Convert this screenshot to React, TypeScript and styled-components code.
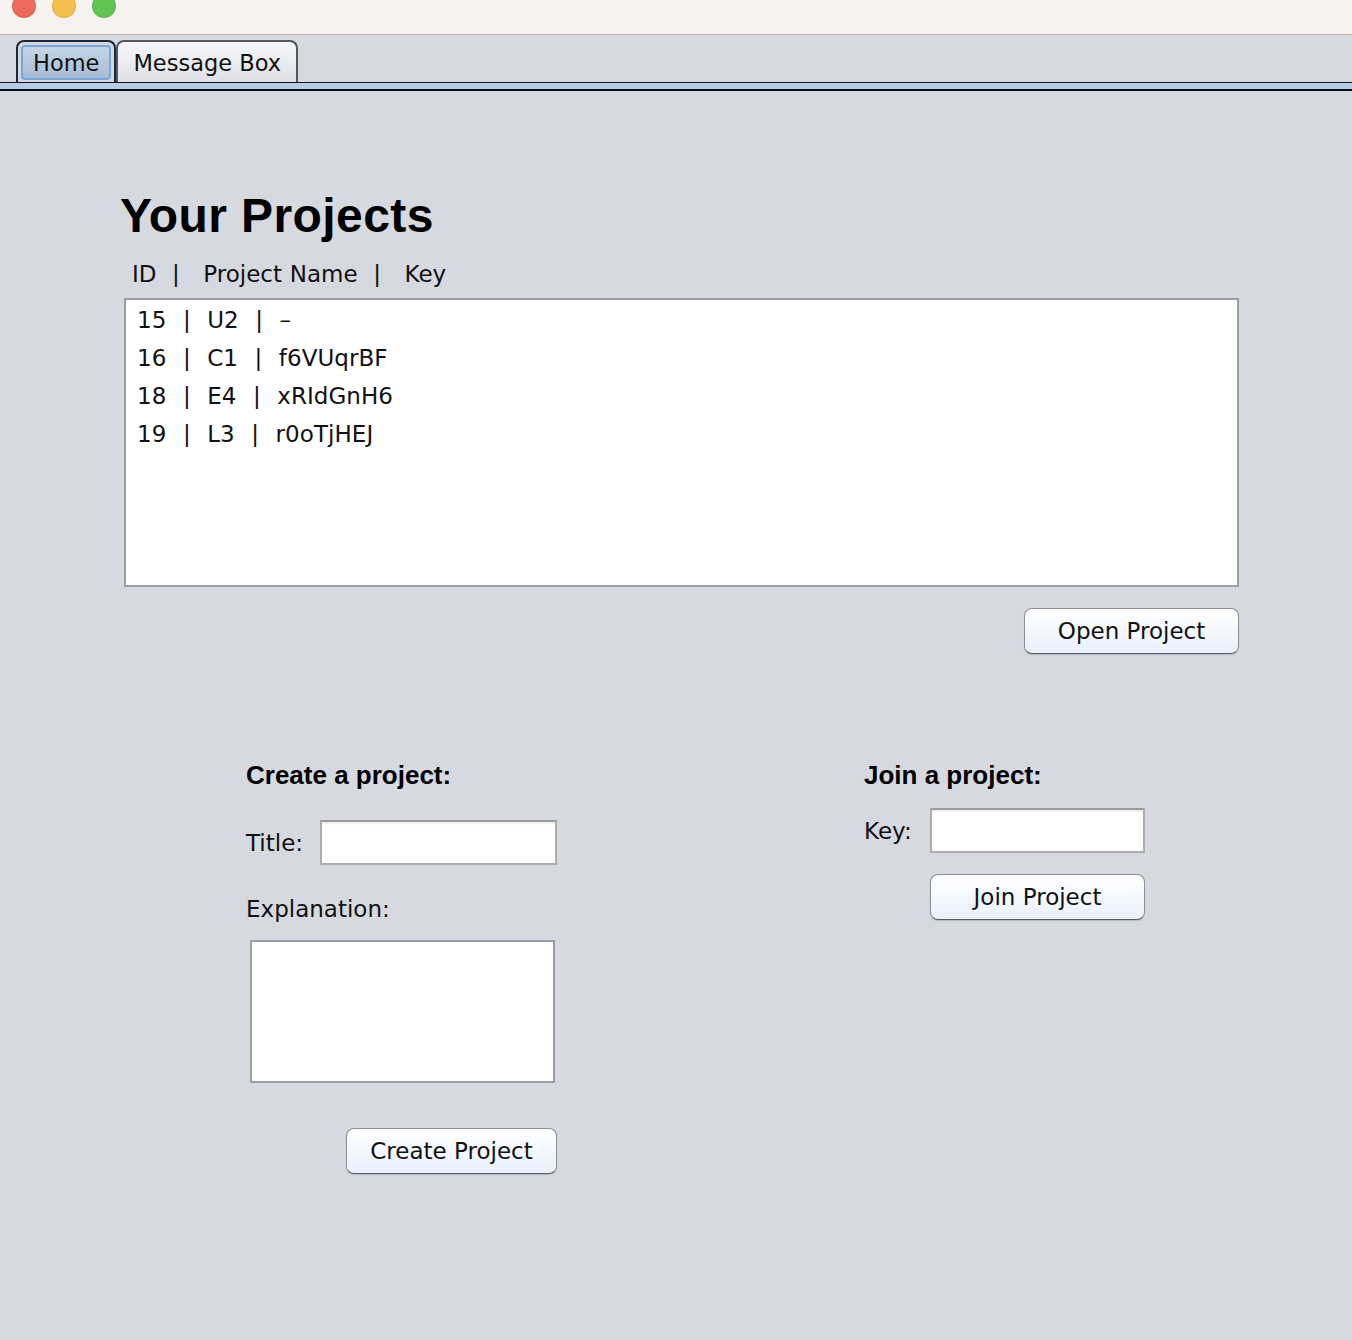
import React from "react";
import styled, { createGlobalStyle } from "styled-components";

interface Project {
  id: number;
  name: string;
  key: string;
}

const projects: Project[] = [
  { id: 15, name: "U2", key: "–" },
  { id: 16, name: "C1", key: "f6VUqrBF" },
  { id: 18, name: "E4", key: "xRIdGnH6" },
  { id: 19, name: "L3", key: "r0oTjHEJ" },
];

const GlobalStyle = createGlobalStyle`
  html, body {
    margin: 0;
    padding: 0;
    background: #d6d9e0;
  }
  body {
    font-family: "DejaVu Sans", "Liberation Sans", sans-serif;
    color: #111;
  }
`;

export default function App() {
  return (
    <>
      <GlobalStyle />
      <Window>
        <TitleBar>
          <Light color="#ec6a5e" />
          <Light color="#f4bf4f" />
          <Light color="#61c554" />
        </TitleBar>

        <TabRow>
          <Tab active>
            <TabInner active>Home</TabInner>
          </Tab>
          <Tab>
            <TabInner>Message Box</TabInner>
          </Tab>
        </TabRow>
        <TabStrip />

        <Content>
          <Heading>Your Projects</Heading>
          <ColumnHeader>{"ID  |   Project Name  |   Key"}</ColumnHeader>
          <ProjectList>
            {projects.map((p) => (
              <ProjectRow key={p.id}>{`${p.id}  |  ${p.name}  |  ${p.key}`}</ProjectRow>
            ))}
          </ProjectList>
          <ButtonRow>
            <Button width={215}>Open Project</Button>
          </ButtonRow>

          <Forms>
            <FormColumn width={311}>
              <SubHeading>Create a project:</SubHeading>
              <FieldRow top={31}>
                <Label>Title:</Label>
                <TextField width={237} />
              </FieldRow>
              <Label style={{ marginTop: 30 }}>Explanation:</Label>
              <TextArea />
              <Button width={211} top={45}>
                Create Project
              </Button>
            </FormColumn>

            <FormColumn width={281}>
              <SubHeading>Join a project:</SubHeading>
              <FieldRow top={19}>
                <Label>Key:</Label>
                <TextField width={215} />
              </FieldRow>
              <Button width={215} top={21}>
                Join Project
              </Button>
            </FormColumn>
          </Forms>
        </Content>
      </Window>
    </>
  );
}

const Window = styled.div`
  min-height: 1340px;
  background: #d6d9e0;
`;

const TitleBar = styled.div`
  height: 34px;
  background: #f6f2ef;
  border-bottom: 1px solid #b8b8bc;
  display: flex;
  align-items: flex-start;
  gap: 16px;
  padding-left: 12px;
  overflow: hidden;
`;

const Light = styled.span<{ color: string }>`
  width: 24px;
  height: 24px;
  margin-top: -6px;
  border-radius: 50%;
  background: ${(props) => props.color};
  box-shadow: inset 0 0 0 1px rgba(0, 0, 0, 0.08);
`;

const TabRow = styled.div`
  display: flex;
  align-items: flex-end;
  padding: 5px 0 0 16px;
  border-bottom: 1px solid #0e1424;
`;

const Tab = styled.div<{ active?: boolean }>`
  height: 42px;
  box-sizing: border-box;
  border: 2px solid ${(props) => (props.active ? "#1c2738" : "#55575e")};
  border-bottom: none;
  border-radius: 8px 8px 0 0;
  padding: ${(props) => (props.active ? "3px 3px 2px" : "0")};
  background: ${(props) =>
    props.active ? "#d3d8e0" : "linear-gradient(#f7f7f9, #dfe1e7)"};
  display: flex;
`;

const TabInner = styled.div<{ active?: boolean }>`
  display: flex;
  align-items: center;
  justify-content: center;
  font-size: 22.5px;
  color: #111;
  padding: ${(props) => (props.active ? "1px 10px 0" : "1px 15px 0")};
  border-radius: 4px;
  border: ${(props) => (props.active ? "2px solid #7ba7d8" : "none")};
  background: ${(props) =>
    props.active ? "linear-gradient(#c6d6e8, #a6bcd4)" : "transparent"};
`;

const TabStrip = styled.div`
  height: 6px;
  background: #b8cde3;
  border-bottom: 2px solid #080c1a;
`;

const Content = styled.div`
  padding: 97px 0 0 120px;
  width: 1120px;
`;

const Heading = styled.h1`
  margin: 0;
  font-family: "Liberation Sans", Arial, sans-serif;
  font-weight: bold;
  font-size: 48px;
  letter-spacing: 0.4px;
  line-height: 56px;
  color: #000;
`;

const ColumnHeader = styled.div`
  margin: 16px 0 0 12px;
  font-size: 23px;
  line-height: 28px;
  word-spacing: 0.5px;
  white-space: pre;
`;

const ProjectList = styled.div`
  margin: 10px 0 0 4px;
  width: 1115px;
  height: 289px;
  box-sizing: border-box;
  border: 2px solid #9b9ea6;
  background: #fff;
  padding: 1px 11px;
`;

const ProjectRow = styled.div`
  font-size: 23px;
  line-height: 38px;
  word-spacing: 0.9px;
  letter-spacing: 0.05px;
  white-space: pre;
`;

const ButtonRow = styled.div`
  display: flex;
  justify-content: flex-end;
  width: 1119px;
  margin-top: 21px;
`;

const Button = styled.button<{ width: number; top?: number }>`
  width: ${(props) => props.width}px;
  height: 46px;
  margin-top: ${(props) => props.top ?? 0}px;
  align-self: flex-end;
  box-sizing: border-box;
  border: 1px solid #8b8e95;
  border-bottom-color: #5a5d63;
  border-radius: 8px;
  background: linear-gradient(#ffffff, #e9f1fc);
  box-shadow: 0 1px 1px rgba(0, 0, 0, 0.15);
  font-family: "DejaVu Sans", sans-serif;
  font-size: 23px;
  color: #111;
  padding: 0;
`;

const Forms = styled.div`
  display: flex;
  gap: 307px;
  margin: 103px 0 0 126px;
`;

const FormColumn = styled.div<{ width: number }>`
  width: ${(props) => props.width}px;
  display: flex;
  flex-direction: column;
`;

const SubHeading = styled.h2`
  margin: 0;
  font-family: "Liberation Sans", Arial, sans-serif;
  font-weight: bold;
  font-size: 26px;
  line-height: 32px;
  padding-top: 2px;
  color: #000;
`;

const FieldRow = styled.div<{ top: number }>`
  display: flex;
  align-items: center;
  justify-content: space-between;
  margin-top: ${(props) => props.top - 2}px;
`;

const Label = styled.span`
  font-size: 23px;
  line-height: 28px;
`;

const TextField = styled.input<{ width: number }>`
  width: ${(props) => props.width}px;
  height: 45px;
  box-sizing: border-box;
  border: 2px solid #adadad;
  border-top-color: #9c9c9c;
  box-shadow: inset 0 2px 2px rgba(0, 0, 0, 0.07);
  background: #fff;
  outline: none;
  margin: 0;
`;

const TextArea = styled.textarea`
  width: 305px;
  height: 143px;
  margin: 17px 0 0 4px;
  box-sizing: border-box;
  border: 2px solid #9b9ea6;
  background: #fff;
  resize: none;
  outline: none;
`;
